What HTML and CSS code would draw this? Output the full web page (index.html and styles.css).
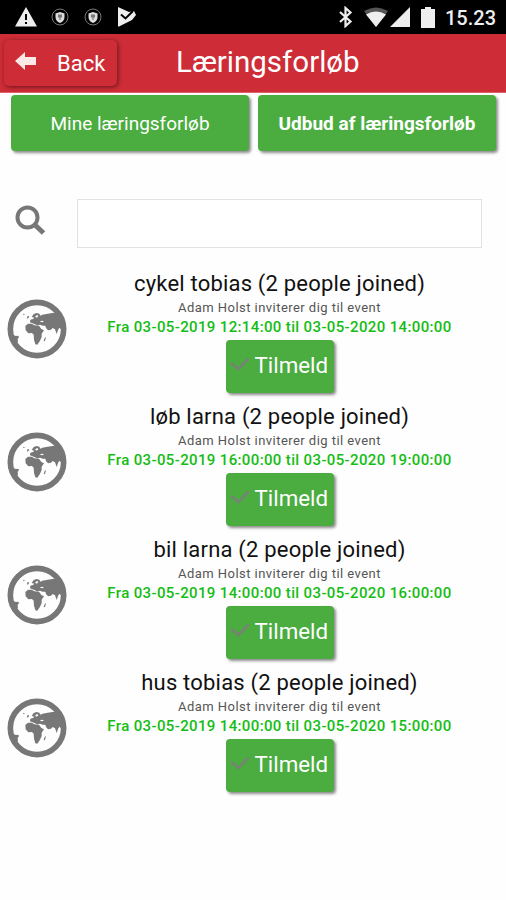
FILE: index.html
```html
<!DOCTYPE html>
<html lang="da">
<head>
    <meta charset="UTF-8">
    <meta name="viewport" content="width=device-width, initial-scale=1.0">
    <title>Læringsforløb</title>
    <link rel="stylesheet" href="styles.css">
</head>
<body>
    <svg class="defs" width="0" height="0">
        <symbol id="globe" viewBox="22 27 180 180">
            <circle cx="112" cy="117" r="80" fill="none" stroke="#777" stroke-width="17"/>
            <path d="M77 108l8-7 11 0 8 5 14 1 7 10 8 4-7 10v10l-5 11-8 12-6-1-4-14-1-15-5-5-11 1-8-9zM91 97l1-8 8-2 4-4-8-2 6-9 9-3 8 2 3 6 6-3 16-3 30-4 18 36v25l-12-15-4 5-5 14-5-14-7-4-5 5-9 2-6-7-2-7-8 0-8-3-8 2z"/>
            <path d="M34 131l14 7 8-1 2 5-4 4 1 12-14-6zM135 144l4-3-3 12-4 1zM70 71l6 2-4 3zM83 79l5-1-1 6-5 2z"/>
            <path d="M106 79l7-4 3 4-5 4zM120 94l8-2 5 3-6 2z" fill="#fff"/>
        </symbol>
        <symbol id="shield" viewBox="0 0 18 18">
            <circle cx="9" cy="9" r="8" fill="none" stroke="#777" stroke-width="1"/>
            <path d="M4.500 5.500L9 4l4.500 1.500V9q0 4-4.500 6-4.500-2-4.500-6z" fill="#ddd"/>
            <path d="M7 6.500h4v3H9.600V12H8.400V9.500H7z" fill="#777"/>
        </symbol>
        <symbol id="check" viewBox="0 0 20 14">
            <path d="M1 6l7.500 6L18.500 1.500" fill="none" stroke="#7b7f7b" stroke-width="2.600"/>
        </symbol>
    </svg>

    <div class="statusbar">
        <div class="status-left">
            <svg width="22" height="20" viewBox="0 0 22 20"><path d="M11 0l11 19.500H0z" fill="#eee"/><path d="M10 7h2v6h-2zM10 15h2v2h-2z" fill="#000"/></svg>
            <svg class="shield" width="18" height="18"><use href="#shield"/></svg>
            <svg class="shield" width="18" height="18"><use href="#shield"/></svg>
            <svg width="19" height="20" viewBox="0 0 19 20"><path d="M1 0l11 5 5-1 2 4-4 5L2 19.500H1z" fill="#eee"/><path d="M4 7.500l4.500 4L16 4" fill="none" stroke="#000" stroke-width="2"/></svg>
        </div>
        <div class="status-right">
            <svg class="bluetooth" width="15" height="22" viewBox="0 0 15 22"><path d="M2 6l10.500 9.500-5 4.500V2l5 4.500L2 16" fill="none" stroke="#eee" stroke-width="2.200"/></svg>
            <svg class="wifi" width="26" height="20" viewBox="0 0 26 20"><path d="M1 4q12-7 24 0L13 20z" fill="#555"/><path d="M3 7.500q10-6 20 0L13 20z" fill="#eee"/></svg>
            <svg class="signal" width="20" height="20" viewBox="0 0 20 20"><path d="M20 0v20H0z" fill="#eee"/></svg>
            <svg class="battery" width="14" height="21" viewBox="0 0 14 21"><path d="M0 2h4V0h6v2h4v19H0z" fill="#eee"/></svg>
            <span class="clock">15.23</span>
        </div>
    </div>

    <div class="header">
        <button class="back">
            <svg width="21" height="18" viewBox="0 0 21 18"><path d="M0 9l10-9v5h11v8H10v5z" fill="#fde8e8"/></svg>
            <span>Back</span>
        </button>
        <h1>Læringsforløb</h1>
    </div>

    <div class="tabs">
        <button class="tab">Mine læringsforløb</button>
        <button class="tab active">Udbud af læringsforløb</button>
    </div>

    <div class="search">
        <svg width="31" height="31" viewBox="0 0 31 31"><circle cx="12.500" cy="12.500" r="10" fill="none" stroke="#777" stroke-width="4"/><path d="M19.500 19.500l9 8.500" stroke="#777" stroke-width="5"/></svg>
        <input type="text">
    </div>

    <div class="events">
        <div class="event">
            <svg class="globe" width="60" height="60"><use href="#globe"/></svg>
            <div class="info">
                <h2>cykel tobias (2 people joined)</h2>
                <p class="invite">Adam Holst inviterer dig til event</p>
                <p class="date">Fra 03-05-2019 12:14:00 til 03-05-2020 14:00:00</p>
                <button class="join"><svg width="20" height="14"><use href="#check"/></svg>Tilmeld</button>
            </div>
        </div>
        <div class="event">
            <svg class="globe" width="60" height="60"><use href="#globe"/></svg>
            <div class="info">
                <h2>løb larna (2 people joined)</h2>
                <p class="invite">Adam Holst inviterer dig til event</p>
                <p class="date">Fra 03-05-2019 16:00:00 til 03-05-2020 19:00:00</p>
                <button class="join"><svg width="20" height="14"><use href="#check"/></svg>Tilmeld</button>
            </div>
        </div>
        <div class="event">
            <svg class="globe" width="60" height="60"><use href="#globe"/></svg>
            <div class="info">
                <h2>bil larna (2 people joined)</h2>
                <p class="invite">Adam Holst inviterer dig til event</p>
                <p class="date">Fra 03-05-2019 14:00:00 til 03-05-2020 16:00:00</p>
                <button class="join"><svg width="20" height="14"><use href="#check"/></svg>Tilmeld</button>
            </div>
        </div>
        <div class="event">
            <svg class="globe" width="60" height="60"><use href="#globe"/></svg>
            <div class="info">
                <h2>hus tobias (2 people joined)</h2>
                <p class="invite">Adam Holst inviterer dig til event</p>
                <p class="date">Fra 03-05-2019 14:00:00 til 03-05-2020 15:00:00</p>
                <button class="join"><svg width="20" height="14"><use href="#check"/></svg>Tilmeld</button>
            </div>
        </div>
    </div>
</body>
</html>
```
FILE: styles.css
```css
* {
    box-sizing: border-box;
}
body {
    margin: 0;
    height: 900px;
    overflow: hidden;
    background: #fefefe;
    font-family: Roboto, "Liberation Sans", sans-serif;
}
svg {
    display: block;
    flex: none;
}
.defs {
    height: 0;
}
h1, h2, p {
    margin: 0;
    font-weight: normal;
    white-space: nowrap;
}
button {
    font-family: inherit;
    border: none;
    padding: 0;
    color: #fff;
}
.statusbar {
    height: 34px;
    background: #000;
    display: flex;
    justify-content: space-between;
    padding: 0 11px 0 15px;
}
.status-left, .status-right {
    display: flex;
    align-items: center;
}
.status-left {
    gap: 15px;
}
.shield:nth-child(2) {
    margin-left: -1px;
}
.wifi {
    margin-left: 10px;
}
.signal {
    margin-left: 1px;
}
.battery {
    margin-left: 11px;
}
.clock {
    margin-left: 10px;
    width: 50px;
    color: #eee;
    font-size: 20px;
    font-weight: 500;
    white-space: nowrap;
    padding-top: 2px;
}
.header {
    height: 59px;
    background: #ce2c36;
    border-bottom: 1px solid #d9646b;
    display: flex;
    align-items: flex-start;
}
.back {
    width: 113px;
    height: 46px;
    margin: 6px 0 0 4px;
    padding-left: 11px;
    background: #ce2c36;
    border-radius: 5px;
    box-shadow: 1px 1px 4px rgba(0, 0, 0, 0.5);
    display: flex;
    align-items: center;
    font-size: 22px;
}
.back svg {
    margin: -4px 21px 0 0;
}
.header h1 {
    margin-left: 59px;
    color: #fff;
    font-size: 29.5px;
    line-height: 56px;
}
.tabs {
    display: flex;
    gap: 9px;
    padding: 2px 10px 0 11px;
}
.tab {
    flex: 1;
    height: 56px;
    background: #4bac3f;
    border-radius: 4px;
    box-shadow: 2px 2px 3px rgba(0, 0, 0, 0.45);
    font-size: 19px;
}
.active {
    font-weight: bold;
}
.search {
    display: flex;
    align-items: center;
    padding: 48px 24px 0 15px;
}
.search input {
    width: 405px;
    height: 49px;
    margin-left: 31px;
    border: 1px solid #e2e2e2;
    background: #fff;
}
.search svg {
    margin-top: -6px;
}
.events {
    padding-top: 20px;
}
.event {
    display: flex;
    height: 133px;
    padding-left: 7px;
}
.globe {
    margin-top: 31px;
    fill: #777;
}
.info {
    width: 425px;
    display: flex;
    flex-direction: column;
    align-items: center;
}
.info h2 {
    height: 31px;
    color: #111;
    font-size: 22px;
    letter-spacing: 0.2px;
    line-height: 31px;
}
.invite {
    height: 18px;
    color: #555;
    font-size: 13px;
    letter-spacing: 0.45px;
    line-height: 17px;
}
.date {
    height: 22px;
    color: #14bd14;
    font-size: 15px;
    font-weight: 500;
    letter-spacing: 0.36px;
    line-height: 20px;
}
.join {
    width: 108px;
    height: 53px;
    margin-top: 1px;
    background: #4bac3f;
    border-radius: 4px;
    box-shadow: 2px 2px 3px rgba(0, 0, 0, 0.45);
    display: flex;
    align-items: center;
    padding: 0 0 3px 4px;
    font-size: 22.3px;
}
.join svg {
    margin: -3px 5px 0 0;
    opacity: 0.9;
}
```
